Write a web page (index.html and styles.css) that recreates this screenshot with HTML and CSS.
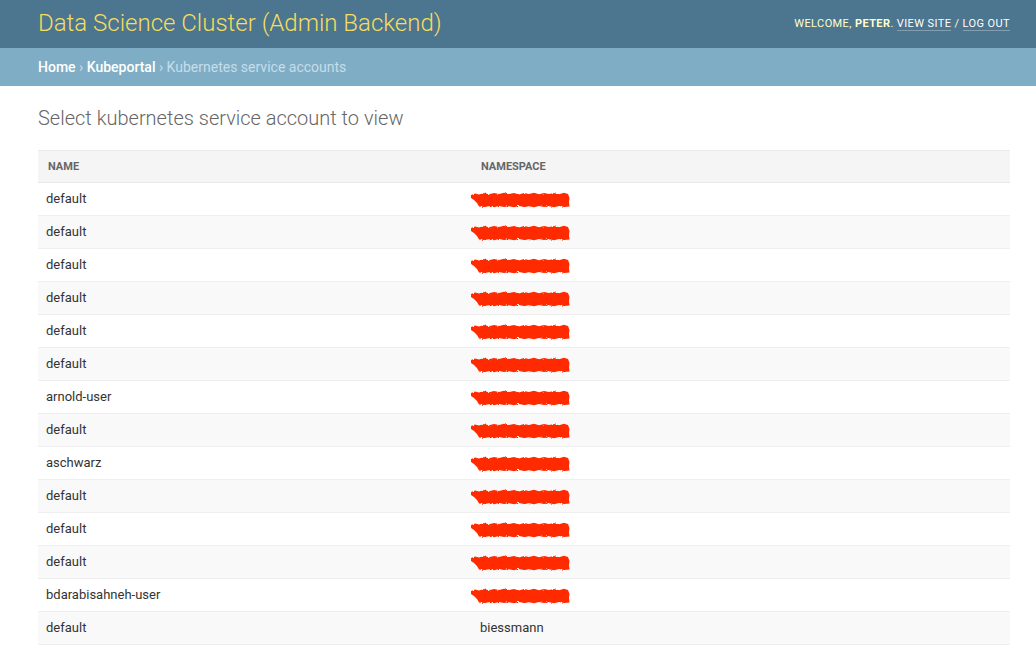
FILE: index.html
```html
<!DOCTYPE html>
<html lang="en">
<head>
<meta charset="utf-8">
<title>Select kubernetes service account to view</title>
<link rel="stylesheet" href="styles.css">
</head>
<body>
<svg width="0" height="0" class="defs">
  <defs>
    <filter id="rough" x="-5%" y="-20%" width="110%" height="140%">
      <feTurbulence type="fractalNoise" baseFrequency="0.9" numOctaves="2" seed="3" result="n"/>
      <feDisplacementMap in="SourceGraphic" in2="n" scale="2.5"/>
    </filter>
    <symbol id="scribble" viewBox="0 0 100 16">
      <path d="M1 3 L5 1.5 L9 2.5 L14 1 L19 2.2 L24 1 L29 2 L34 0.8 L39 2 L44 1 L49 2.4 L54 1 L59 2 L64 0.8 L69 2.2 L74 1 L79 2 L84 1 L89 2.3 L94 0.8 L98 2 L99.5 6 L99 10 L99.5 14.5 L94 15 L89 14 L84 15.2 L79 14.2 L74 15 L69 14 L64 15.3 L59 14.3 L54 15 L49 14 L44 15.2 L39 14.2 L34 15 L29 14 L24 15.3 L19 14.2 L14 15 L9 14.4 L7 11 L4 8 L1 6 Z" fill="#ff2a00" filter="url(#rough)"/>
    </symbol>
  </defs>
</svg>
<header class="header">
  <div class="branding">Data Science Cluster (Admin Backend)</div>
  <div class="user-tools">
    Welcome, <strong>Peter</strong>. <a href="#">View site</a> / <a href="#">Log out</a>
  </div>
</header>
<nav class="breadcrumbs">
  <a href="#">Home</a> › <a href="#">Kubeportal</a> › Kubernetes service accounts
</nav>
<main class="content">
  <h1 class="title">Select kubernetes service account to view</h1>
  <table class="result-list">
    <thead>
      <tr><th class="col-name">Name</th><th>Namespace</th></tr>
    </thead>
    <tbody>
      <tr><td>default</td><td><span class="redact"><svg class="scrib"><use href="#scribble"/></svg></span></td></tr>
      <tr><td>default</td><td><span class="redact"><svg class="scrib"><use href="#scribble"/></svg></span></td></tr>
      <tr><td>default</td><td><span class="redact"><svg class="scrib"><use href="#scribble"/></svg></span></td></tr>
      <tr><td>default</td><td><span class="redact"><svg class="scrib"><use href="#scribble"/></svg></span></td></tr>
      <tr><td>default</td><td><span class="redact"><svg class="scrib"><use href="#scribble"/></svg></span></td></tr>
      <tr><td>default</td><td><span class="redact"><svg class="scrib"><use href="#scribble"/></svg></span></td></tr>
      <tr><td>arnold-user</td><td><span class="redact"><svg class="scrib"><use href="#scribble"/></svg></span></td></tr>
      <tr><td>default</td><td><span class="redact"><svg class="scrib"><use href="#scribble"/></svg></span></td></tr>
      <tr><td>aschwarz</td><td><span class="redact"><svg class="scrib"><use href="#scribble"/></svg></span></td></tr>
      <tr><td>default</td><td><span class="redact"><svg class="scrib"><use href="#scribble"/></svg></span></td></tr>
      <tr><td>default</td><td><span class="redact"><svg class="scrib"><use href="#scribble"/></svg></span></td></tr>
      <tr><td>default</td><td><span class="redact"><svg class="scrib"><use href="#scribble"/></svg></span></td></tr>
      <tr><td>bdarabisahneh-user</td><td><span class="redact"><svg class="scrib"><use href="#scribble"/></svg></span></td></tr>
      <tr><td>default</td><td>biessmann</td></tr>
    </tbody>
  </table>
</main>
</body>
</html>
```

FILE: styles.css
```css
* { box-sizing: border-box; }

html, body {
  margin: 0;
  padding: 0;
  background: #fff;
  font-family: Roboto, "Liberation Sans", sans-serif;
  color: #333;
}

.defs { position: absolute; width: 0; height: 0; }

.header {
  height: 48px;
  background: #4c758f;
  display: flex;
  align-items: center;
  justify-content: space-between;
  padding: 0 26px 0 38px;
}

.branding {
  font-size: 24px;
  font-weight: 300;
  color: #f5dd5d;
  line-height: 28px;
  margin-top: -2px;
}

.user-tools {
  font-size: 11px;
  letter-spacing: 0.4px;
  text-transform: uppercase;
  color: #ffffcc;
  line-height: 14px;
}

.user-tools strong { font-weight: 700; }

.user-tools a {
  color: #fff;
  text-decoration: none;
  border-bottom: 1px solid rgba(255, 255, 255, 0.3);
}

.breadcrumbs {
  height: 38px;
  background: #80adc6;
  padding: 10px 38px;
  font-size: 14px;
  line-height: 18px;
  color: #c6dde9;
}

.breadcrumbs a {
  color: #fff;
  text-decoration: none;
  font-weight: 500;
}

.content {
  padding: 20px 26px 20px 38px;
}

.title {
  margin: 0 0 20px;
  font-size: 20px;
  font-weight: 300;
  color: #666;
  line-height: 24px;
}

.result-list {
  width: 100%;
  border-collapse: collapse;
  font-size: 13px;
}

.result-list th {
  text-align: left;
  font-size: 11px;
  font-weight: 700;
  text-transform: uppercase;
  color: #666;
  background: #f5f5f5;
  border-top: 1px solid #eaeaea;
  border-bottom: 1px solid #eaeaea;
  padding: 9px 9px 8px;
  line-height: 14px;
}

.result-list th.col-name { width: 434px; padding-left: 10px; }

.result-list td {
  padding: 8px 8px;
  line-height: 16px;
  border-bottom: 1px solid #eee;
  color: #333;
}

.result-list tbody tr:nth-child(even) td { background: #f9f9f9; }

.redact {
  position: relative;
  display: inline-block;
  width: 90px;
  height: 16px;
  vertical-align: top;
}

.scrib {
  position: absolute;
  left: -10px;
  top: 1px;
  width: 100px;
  height: 16px;
}
```
